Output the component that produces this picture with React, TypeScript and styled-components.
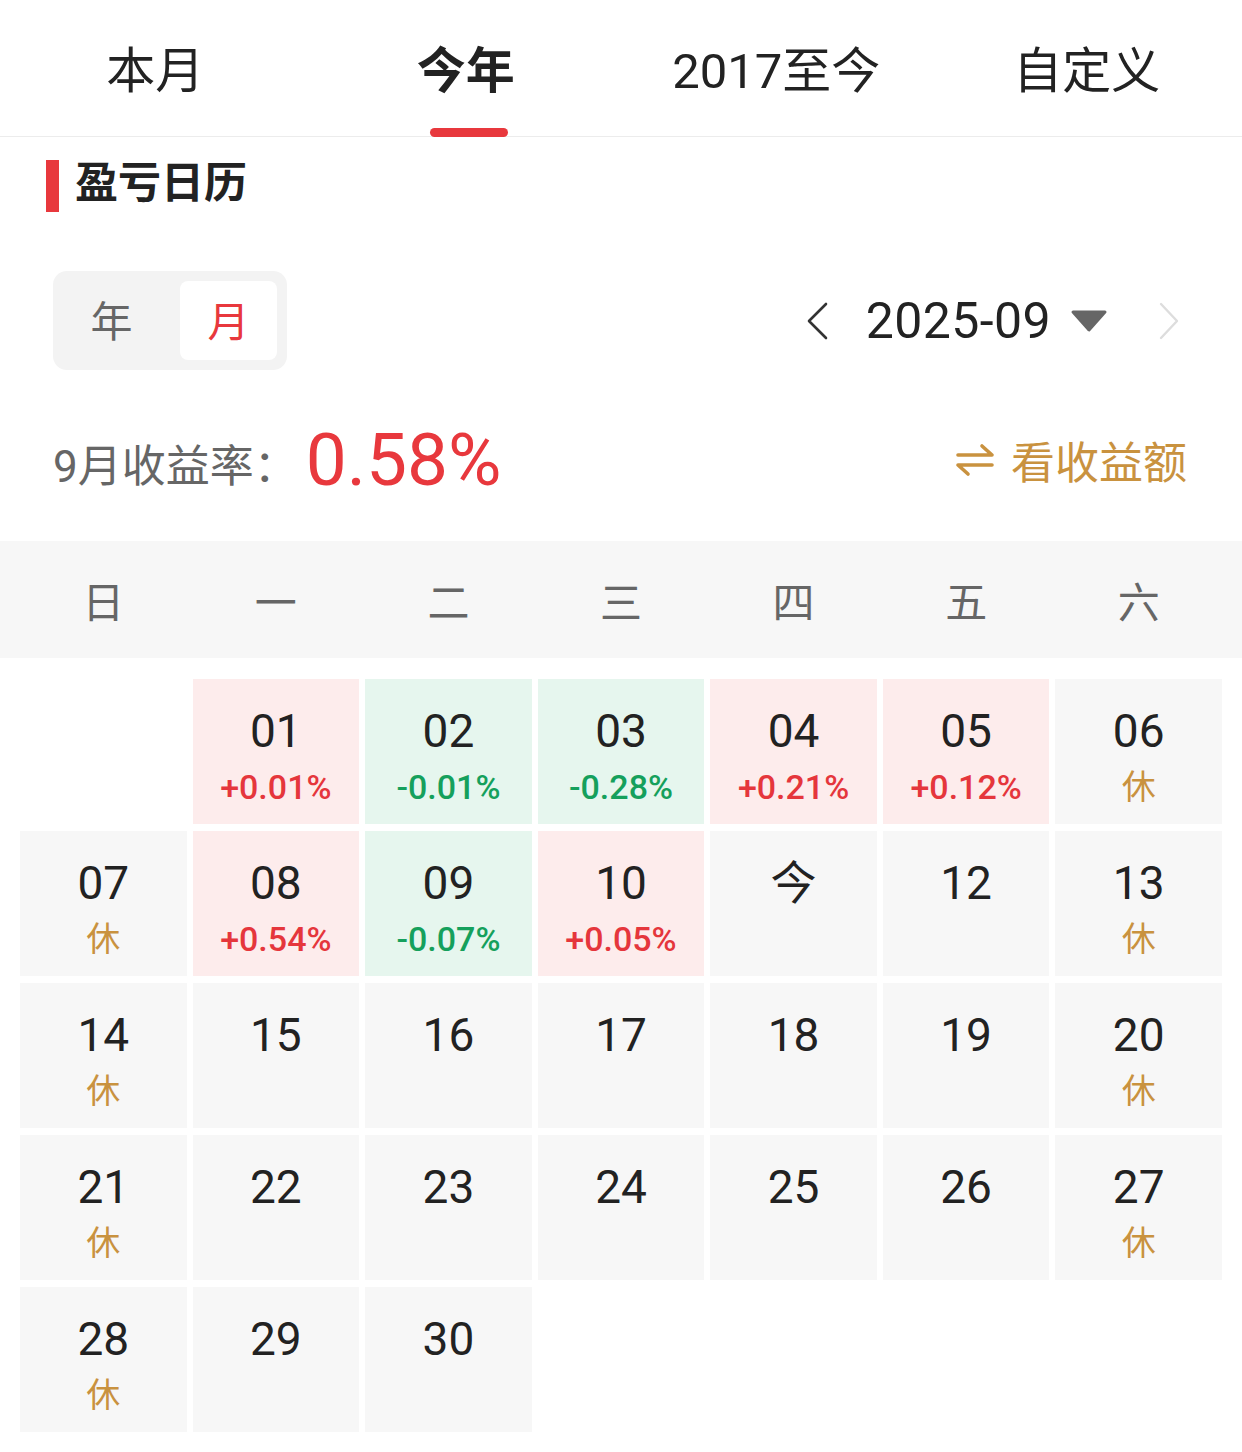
import React from "react";
import styled, { createGlobalStyle } from "styled-components";

const GlobalStyle = createGlobalStyle`
  html, body { margin: 0; padding: 0; background: #ffffff; }
  body {
    font-family: "Roboto", "Noto Sans CJK SC", "Noto Sans", sans-serif;
    color: #222222;
    -webkit-font-smoothing: antialiased;
  }
  * { box-sizing: border-box; }
`;

const RED = "#e8383d";
const GREEN = "#15a05c";
const GOLD = "#c9923f";

const Page = styled.div`
  width: 1242px;
  min-height: 1452px;
  background: #fff;
  display: flex;
  flex-direction: column;
`;

const TabBar = styled.div`
  display: grid;
  grid-template-columns: repeat(4, 1fr);
  height: 137px;
  border-bottom: 1px solid #ececec;
`;

const Tab = styled.div<{ $active?: boolean }>`
  display: flex;
  flex-direction: column;
  align-items: center;
  padding-top: 46px;
  font-size: 49px;
  line-height: 52px;
  font-weight: ${(p) => (p.$active ? 700 : 400)};
  color: #222;
`;

const TabLine = styled.div<{ $active?: boolean }>`
  margin-top: auto;
  margin-bottom: -1px;
  width: 78px;
  height: 9px;
  border-radius: 5px;
  background: ${(p) => (p.$active ? RED : "transparent")};
  position: relative;
  left: 3px;
`;

const SectionTitle = styled.div`
  display: flex;
  align-items: center;
  gap: 16px;
  margin-top: 23px;
  padding-left: 46px;
  height: 52px;
  font-size: 43px;
  font-weight: 700;
  color: #222;
`;

const TitleBar = styled.span`
  width: 13px;
  height: 52px;
  background: ${RED};
`;

const TitleText = styled.span`
  line-height: 52px;
  margin-top: -6px;
`;

const ControlsRow = styled.div`
  display: flex;
  align-items: center;
  justify-content: space-between;
  margin-top: 59px;
  padding: 0 62px 0 53px;
  height: 99px;
`;

const Segment = styled.div`
  display: flex;
  gap: 20px;
  padding: 10px;
  background: #f3f3f3;
  border-radius: 14px;
`;

const SegItem = styled.div<{ $active?: boolean }>`
  width: 97px;
  height: 79px;
  display: flex;
  align-items: center;
  justify-content: center;
  border-radius: 8px;
  font-size: 42px;
  padding-bottom: 4px;
  background: ${(p) => (p.$active ? "#ffffff" : "transparent")};
  color: ${(p) => (p.$active ? RED : "#666")};
`;

const DateNav = styled.div`
  display: flex;
  align-items: center;
`;

const DateText = styled.span`
  font-size: 50px;
  color: #222;
  margin: 0 19px 0 37px;
  letter-spacing: 0.4px;
`;

const Caret = styled.svg`
  margin-right: 50px;
`;

const ProfitRow = styled.div`
  display: flex;
  align-items: center;
  justify-content: space-between;
  margin-top: 56px;
  padding: 0 55px 0 53px;
  height: 72px;
`;

const ProfitLeft = styled.div`
  display: flex;
  align-items: center;
`;

const ProfitLabel = styled.span`
  font-size: 44px;
  color: #666;
  margin-top: 2px;
`;

const ProfitValue = styled.span`
  font-size: 73px;
  line-height: 72px;
  color: ${RED};
  margin-left: 8px;
  margin-top: -4px;
`;

const SwitchLink = styled.div`
  display: flex;
  align-items: center;
  gap: 16px;
  font-size: 44px;
  color: ${GOLD};
  margin-top: -4px;
`;

const WeekHeader = styled.div`
  display: grid;
  grid-template-columns: repeat(7, 1fr);
  column-gap: 6px;
  margin-top: 43px;
  padding: 0 20px;
  height: 117px;
  background: #f7f7f7;
  align-items: center;
`;

const WeekLabel = styled.div`
  text-align: center;
  font-size: 42px;
  color: #666;
`;

const Grid = styled.div`
  display: grid;
  grid-template-columns: repeat(7, 1fr);
  grid-auto-rows: 145px;
  column-gap: 6px;
  row-gap: 7px;
  margin-top: 21px;
  padding: 0 20px;
`;

type Tone = "up" | "down" | "rest" | "plain" | "empty";

const cellBg: Record<Tone, string> = {
  up: "#fdecec",
  down: "#e6f6ee",
  rest: "#f7f7f7",
  plain: "#f7f7f7",
  empty: "transparent",
};

const subColor: Record<Tone, string> = {
  up: "#e5363c",
  down: GREEN,
  rest: GOLD,
  plain: "#222",
  empty: "#222",
};

const Cell = styled.div<{ $tone: Tone }>`
  display: flex;
  flex-direction: column;
  align-items: center;
  padding-top: 28px;
  background: ${(p) => cellBg[p.$tone]};
`;

const DayNum = styled.div`
  font-size: 46px;
  line-height: 48px;
  color: #222;
`;

const DaySub = styled.div<{ $tone: Tone }>`
  margin-top: 12px;
  font-size: 34px;
  line-height: 40px;
  font-weight: ${(p) => (p.$tone === "rest" ? 400 : 500)};
  color: ${(p) => subColor[p.$tone]};
`;

type Day = { d: string; sub?: string; tone: Tone };

const days: Day[] = [
  { d: "", tone: "empty" },
  { d: "01", sub: "+0.01%", tone: "up" },
  { d: "02", sub: "-0.01%", tone: "down" },
  { d: "03", sub: "-0.28%", tone: "down" },
  { d: "04", sub: "+0.21%", tone: "up" },
  { d: "05", sub: "+0.12%", tone: "up" },
  { d: "06", sub: "休", tone: "rest" },
  { d: "07", sub: "休", tone: "rest" },
  { d: "08", sub: "+0.54%", tone: "up" },
  { d: "09", sub: "-0.07%", tone: "down" },
  { d: "10", sub: "+0.05%", tone: "up" },
  { d: "今", tone: "plain" },
  { d: "12", tone: "plain" },
  { d: "13", sub: "休", tone: "rest" },
  { d: "14", sub: "休", tone: "rest" },
  { d: "15", tone: "plain" },
  { d: "16", tone: "plain" },
  { d: "17", tone: "plain" },
  { d: "18", tone: "plain" },
  { d: "19", tone: "plain" },
  { d: "20", sub: "休", tone: "rest" },
  { d: "21", sub: "休", tone: "rest" },
  { d: "22", tone: "plain" },
  { d: "23", tone: "plain" },
  { d: "24", tone: "plain" },
  { d: "25", tone: "plain" },
  { d: "26", tone: "plain" },
  { d: "27", sub: "休", tone: "rest" },
  { d: "28", sub: "休", tone: "rest" },
  { d: "29", tone: "plain" },
  { d: "30", tone: "plain" },
];

const tabs = ["本月", "今年", "2017至今", "自定义"];
const weekdays = ["日", "一", "二", "三", "四", "五", "六"];

export default function App() {
  return (
    <Page>
      <GlobalStyle />
      <TabBar>
        {tabs.map((t, i) => (
          <Tab key={t} $active={i === 1}>
            <span>{t}</span>
            <TabLine $active={i === 1} />
          </Tab>
        ))}
      </TabBar>

      <SectionTitle>
        <TitleBar />
        <TitleText>盈亏日历</TitleText>
      </SectionTitle>

      <ControlsRow>
        <Segment>
          <SegItem>年</SegItem>
          <SegItem $active>月</SegItem>
        </Segment>
        <DateNav>
          <svg width="24" height="40" viewBox="0 0 24 40">
            <path d="M21 3 L4 20 L21 37" fill="none" stroke="#333" strokeWidth="2.6" strokeLinecap="round" strokeLinejoin="round" />
          </svg>
          <DateText>2025-09</DateText>
          <Caret width="38" height="24" viewBox="0 0 38 24">
            <path d="M3 3 H35 L19 21 Z" fill="#666" stroke="#666" strokeWidth="3" strokeLinejoin="round" />
          </Caret>
          <svg width="22" height="40" viewBox="0 0 22 40">
            <path d="M3 3 L19 20 L3 37" fill="none" stroke="#dddddd" strokeWidth="2.4" strokeLinecap="round" strokeLinejoin="round" />
          </svg>
        </DateNav>
      </ControlsRow>

      <ProfitRow>
        <ProfitLeft>
          <ProfitLabel>9月收益率：</ProfitLabel>
          <ProfitValue>0.58%</ProfitValue>
        </ProfitLeft>
        <SwitchLink>
          <svg width="40" height="34" viewBox="0 0 40 34">
            <path d="M3 12 H37 L27 3" fill="none" stroke={GOLD} strokeWidth="3.6" strokeLinecap="round" strokeLinejoin="round" />
            <path d="M37 22 H3 L13 31" fill="none" stroke={GOLD} strokeWidth="3.6" strokeLinecap="round" strokeLinejoin="round" />
          </svg>
          <span>看收益额</span>
        </SwitchLink>
      </ProfitRow>

      <WeekHeader>
        {weekdays.map((w) => (
          <WeekLabel key={w}>{w}</WeekLabel>
        ))}
      </WeekHeader>

      <Grid>
        {days.map((day, i) => (
          <Cell key={i} $tone={day.tone}>
            {day.d && <DayNum>{day.d}</DayNum>}
            {day.sub && <DaySub $tone={day.tone}>{day.sub}</DaySub>}
          </Cell>
        ))}
      </Grid>
    </Page>
  );
}
